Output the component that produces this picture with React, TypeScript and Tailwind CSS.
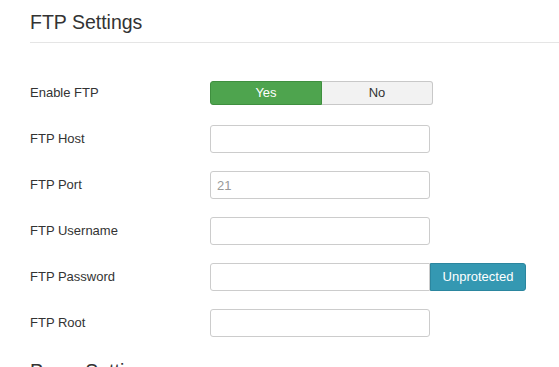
import React from "react";

const labelCls = "w-[180px] shrink-0 text-[13px] text-[#333]";
const inputCls =
    "w-[220px] h-[28px] px-[6px] text-[13px] text-[#555] placeholder:text-[#999] bg-white border border-[#ccc] rounded-[3px] outline-none";

type Row = { label: string; placeholder?: string };

const rows: Row[] = [
    { label: "FTP Host" },
    { label: "FTP Port", placeholder: "21" },
    { label: "FTP Username" },
];

export default function App() {
    return (
        <div className="w-[559px] h-[367px] overflow-hidden bg-white pl-[30px] pt-[3px] font-['Liberation_Sans',Arial,sans-serif]">
            {/* Legend */}
            <div className="h-[40px] leading-[39px] text-[19.5px] text-[#333] border-b border-[#e5e5e5]">
                FTP Settings
            </div>

            <div className="mt-[36px] flex flex-col gap-[18px]">
                {/* Enable FTP */}
                <div className="flex items-center h-[28px]">
                    <div className={labelCls}>Enable FTP</div>
                    <div className="flex h-[24px] text-[13px]">
                        <button className="w-[112px] h-full bg-[#4ea44e] border border-[#3f8f3f] rounded-l-[3px] text-white">
                            Yes
                        </button>
                        <button className="w-[111px] h-full bg-[#f2f2f2] border border-l-0 border-[#c8c8c8] rounded-r-[3px] text-[#333]">
                            No
                        </button>
                    </div>
                </div>

                {rows.map((r) => (
                    <div key={r.label} className="flex items-center h-[28px]">
                        <div className={labelCls}>{r.label}</div>
                        <input className={inputCls} placeholder={r.placeholder} readOnly />
                    </div>
                ))}

                {/* Password */}
                <div className="flex items-center h-[28px]">
                    <div className={labelCls}>FTP Password</div>
                    <input className={inputCls + " rounded-r-none"} type="password" readOnly />
                    <button className="w-[96px] h-[28px] bg-[#3498b2] border border-[#2b869f] rounded-r-[3px] text-[13px] text-white">
                        Unprotected
                    </button>
                </div>

                <div className="flex items-center h-[28px]">
                    <div className={labelCls}>FTP Root</div>
                    <input className={inputCls} readOnly />
                </div>
            </div>

            {/* Next legend, cut off by the window edge as in the reference */}
            <div className="mt-[15px] h-[40px] leading-[39px] text-[19.5px] text-[#333] border-b border-[#e5e5e5]">
                Proxy Settings
            </div>
        </div>
    );
}
